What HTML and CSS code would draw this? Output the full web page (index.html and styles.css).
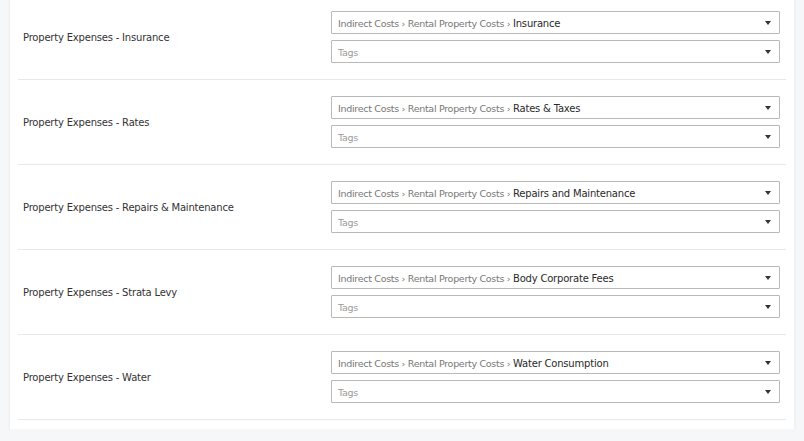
FILE: index.html
```html
<!DOCTYPE html>
<html>
<head>
<meta charset="utf-8">
<link rel="stylesheet" href="styles.css">
</head>
<body>
<div class="card">
  <div class="row">
    <div class="label">Property Expenses - Insurance</div>
    <div class="fields">
      <div class="select"><span class="crumb">Indirect Costs › Rental Property Costs › </span><span class="value">Insurance</span><span class="caret"></span></div>
      <div class="select"><span class="placeholder">Tags</span><span class="caret"></span></div>
    </div>
  </div>
  <div class="row">
    <div class="label">Property Expenses - Rates</div>
    <div class="fields">
      <div class="select"><span class="crumb">Indirect Costs › Rental Property Costs › </span><span class="value">Rates &amp; Taxes</span><span class="caret"></span></div>
      <div class="select"><span class="placeholder">Tags</span><span class="caret"></span></div>
    </div>
  </div>
  <div class="row">
    <div class="label">Property Expenses - Repairs &amp; Maintenance</div>
    <div class="fields">
      <div class="select"><span class="crumb">Indirect Costs › Rental Property Costs › </span><span class="value">Repairs and Maintenance</span><span class="caret"></span></div>
      <div class="select"><span class="placeholder">Tags</span><span class="caret"></span></div>
    </div>
  </div>
  <div class="row">
    <div class="label">Property Expenses - Strata Levy</div>
    <div class="fields">
      <div class="select"><span class="crumb">Indirect Costs › Rental Property Costs › </span><span class="value">Body Corporate Fees</span><span class="caret"></span></div>
      <div class="select"><span class="placeholder">Tags</span><span class="caret"></span></div>
    </div>
  </div>
  <div class="row">
    <div class="label">Property Expenses - Water</div>
    <div class="fields">
      <div class="select"><span class="crumb">Indirect Costs › Rental Property Costs › </span><span class="value">Water Consumption</span><span class="caret"></span></div>
      <div class="select"><span class="placeholder">Tags</span><span class="caret"></span></div>
    </div>
  </div>
</div>
</body>
</html>
```

FILE: styles.css
```css
html, body {
  margin: 0;
  padding: 0;
  background: #f6f7f9;
  font-family: "DejaVu Sans", Verdana, sans-serif;
  font-size: 10px;
  color: #333;
}
.card {
  margin: -5px 10px 0 10px;
  width: 768px;
  padding: 0 8px 9px 8px;
  background: #fff;
  box-shadow: 0 0 3px rgba(0,0,0,0.08);
}
.row {
  display: flex;
  align-items: center;
  padding: 16px 6px 16px 5px;
  border-bottom: 1px solid #e8e8e8;
}
.label {
  width: 308px;
  flex: none;
  color: #333;
  letter-spacing: -0.2px;
  padding-top: 1px;
}
.fields {
  width: 450px;
  display: flex;
  flex-direction: column;
  gap: 6px;
}
.select {
  position: relative;
  box-sizing: border-box;
  height: 23px;
  border: 1px solid #b8b8b8;
  border-radius: 1px;
  padding: 1px 24px 0 6px;
  display: flex;
  align-items: center;
  white-space: nowrap;
  font-size: 9.5px;
  letter-spacing: -0.3px;
}
.crumb { color: #777; white-space: pre; }
.value { color: #2a2a2a; font-size: 10px; letter-spacing: -0.2px; }
.placeholder { color: #9a9a9a; }
.caret {
  position: absolute;
  right: 8px;
  top: 9px;
  width: 0;
  height: 0;
  border-left: 3px solid transparent;
  border-right: 3px solid transparent;
  border-top: 4px solid #333;
}
```
